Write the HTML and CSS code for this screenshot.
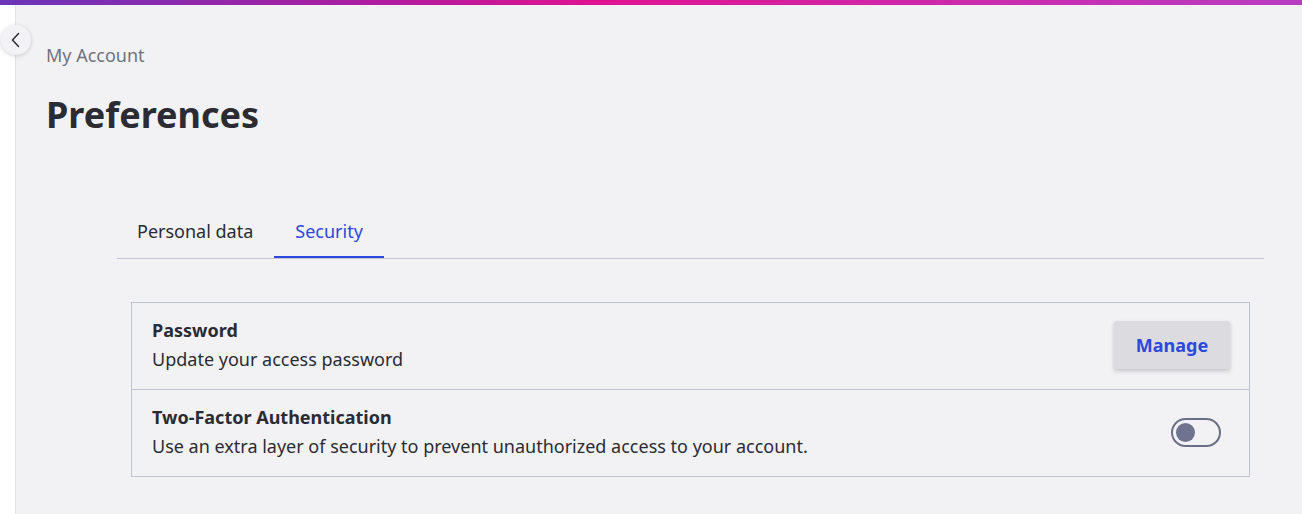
FILE: index.html
```html
<!DOCTYPE html>
<html lang="en">
<head>
<meta charset="utf-8">
<title>Preferences</title>
<link rel="stylesheet" href="styles.css">
</head>
<body>
<div class="topbar"></div>
<div class="layout">
  <aside class="rail">
    <button class="back" aria-label="Back">
      <svg width="16" height="16" viewBox="0 0 16 16"><path d="M10.5 1.5 L4.5 8 L10.5 14.5" fill="none" stroke="#2b2b33" stroke-width="1.5" stroke-linecap="round" stroke-linejoin="round"/></svg>
    </button>
  </aside>
  <main class="main">
    <div class="crumb">My Account</div>
    <h1 class="title">Preferences</h1>
    <section class="panel">
      <nav class="tabs">
        <div class="tab">Personal data</div>
        <div class="tab active">Security</div>
      </nav>
      <div class="card">
        <div class="row">
          <div class="info">
            <div class="row-title">Password</div>
            <div class="row-desc">Update your access password</div>
          </div>
          <button class="manage">Manage</button>
        </div>
        <div class="row">
          <div class="info">
            <div class="row-title">Two-Factor Authentication</div>
            <div class="row-desc">Use an extra layer of security to prevent unauthorized access to your account.</div>
          </div>
          <div class="toggle"><span class="knob"></span></div>
        </div>
      </div>
    </section>
  </main>
</div>
</body>
</html>
```
FILE: styles.css
```css
* { box-sizing: border-box; }
html, body { margin: 0; height: 100%; }
body {
  background: #ffffff;
  font-family: "Noto Sans", "Lato", sans-serif;
  color: #2b2b33;
  overflow: hidden;
}
.topbar {
  height: 5px;
  background: linear-gradient(90deg, #6a35b8 0%, #b21c9e 30%, #e0138f 46%, #cf28a8 70%, #b83cc0 100%);
}
.layout {
  display: flex;
  height: calc(100% - 5px);
}
.rail {
  width: 16px;
  flex: none;
  background: #ffffff;
  border-right: 1px solid #e2e2e6;
  position: relative;
}
.back {
  position: absolute;
  left: 1px;
  top: 20px;
  width: 30px;
  height: 30px;
  border-radius: 50%;
  border: none;
  background: #f3f3f5;
  box-shadow: 0 1px 4px rgba(0,0,0,0.18);
  display: flex;
  align-items: center;
  justify-content: center;
  padding: 0;
  z-index: 2;
}
.main {
  flex: 1;
  background: #f2f2f5;
  padding: 38px 38px 0 30px;
}
.crumb {
  font-size: 18px;
  line-height: 24px;
  color: #70737f;
}
.title {
  margin: 25px 0 0;
  font-size: 36px;
  line-height: 46px;
  font-weight: 700;
  color: #2b2b33;
}
.panel {
  margin: 73px 0 0 71px;
}
.tabs {
  display: flex;
  border-bottom: 1px solid #c4c4d4;
}
.tab {
  padding: 0 21px 0 20px;
  height: 47px;
  line-height: 40px;
  font-size: 18px;
  color: #2b2b33;
}
.tab.active {
  padding: 0 21px;
  color: #2c48e0;
  border-bottom: 2px solid #2c48e0;
  margin-bottom: -1px;
}
.card {
  margin: 43px 14px 0 14px;
  border: 1px solid #c0c4d0;
}
.row {
  display: flex;
  align-items: center;
  justify-content: space-between;
  padding: 13px 19px 15px 20px;
}
.row + .row { border-top: 1px solid #c0c4d0; }
.row-title {
  font-size: 18px;
  line-height: 29px;
  font-weight: 700;
}
.row-desc {
  font-size: 18px;
  line-height: 29px;
}
.manage {
  width: 116px;
  height: 48px;
  border: none;
  border-radius: 3px;
  background: #dcdce0;
  box-shadow: 0 2px 4px rgba(0,0,0,0.2);
  color: #2c48e0;
  font-family: inherit;
  font-size: 18px;
  font-weight: 700;
}
.toggle {
  width: 50px;
  height: 29px;
  border: 2px solid #6b6f85;
  border-radius: 15px;
  margin-right: 9px;
  display: flex;
  align-items: center;
  padding-left: 3px;
}
.knob {
  width: 19px;
  height: 19px;
  border-radius: 50%;
  background: #6f7390;
}
```
